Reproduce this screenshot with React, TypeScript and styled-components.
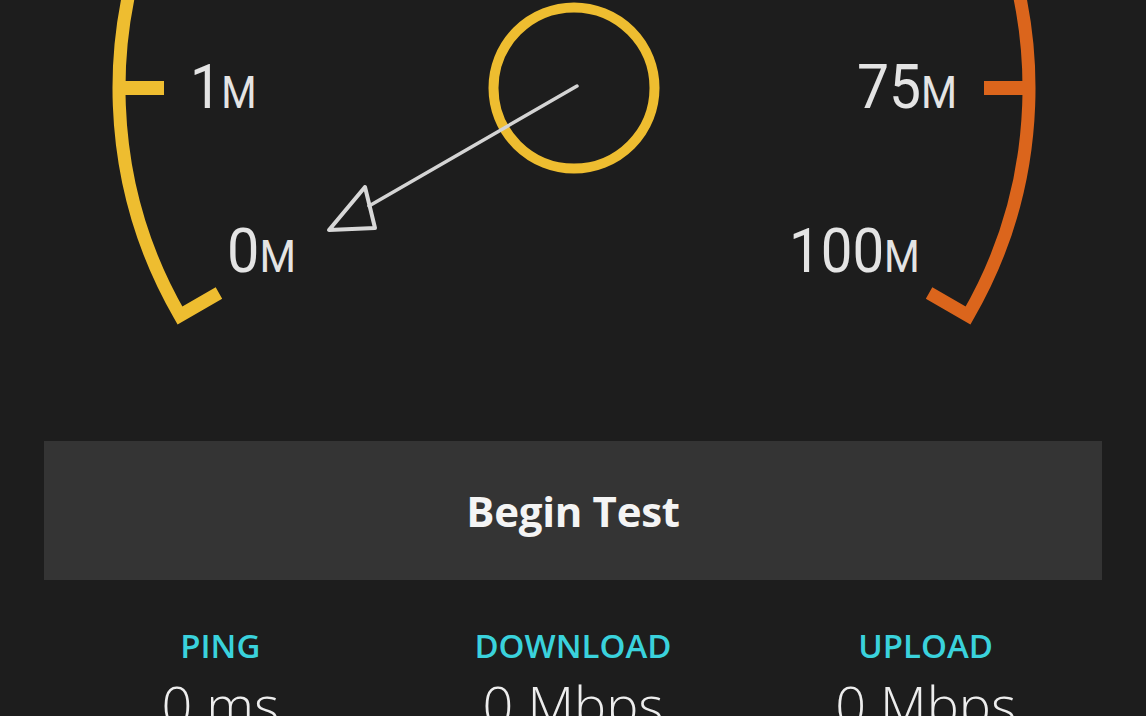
import React from "react";
import styled, { createGlobalStyle } from "styled-components";

const Global = createGlobalStyle`
  html, body { margin: 0; padding: 0; background: #1d1d1d; }
  #root { width: 1146px; height: 716px; }
`;

const YELLOW = "#eebd30";
const ORANGE = "#db651c";

const Screen = styled.div`
  width: 1146px;
  height: 716px;
  overflow: hidden;
  background: #1d1d1d;
  display: flex;
  flex-direction: column;
  font-family: "Open Sans", "Noto Sans", sans-serif;
`;

const GaugeSvg = styled.svg`
  display: block;
  width: 1146px;
  height: 441px;
  flex: none;
`;

const Label = styled.text`
  font-family: "Roboto", "DejaVu Sans Condensed", sans-serif;
  font-weight: 400;
  fill: #e4e4e4;
`;

const BeginButton = styled.button`
  flex: none;
  margin: 0 44px;
  height: 139px;
  border: none;
  background: #343434;
  color: #f4f4f4;
  font-family: "Open Sans", "Noto Sans", sans-serif;
  font-weight: 700;
  font-size: 42px;
  letter-spacing: -0.3px;
  display: flex;
  align-items: center;
  justify-content: center;
  padding: 0;
  cursor: pointer;
`;

const Stats = styled.div`
  margin: 46px 44px 0;
  display: grid;
  grid-template-columns: repeat(3, 1fr);
`;

const Stat = styled.div`
  display: flex;
  flex-direction: column;
  align-items: center;
  gap: 8px;
`;

const StatTitle = styled.div`
  color: #3ad2dc;
  font-weight: 600;
  font-size: 33px;
  line-height: 40px;
`;

const StatValue = styled.div`
  color: #ededed;
  font-weight: 300;
  font-size: 54px;
  line-height: 60px;
  white-space: nowrap;
`;

const cx = 574;
const cy = 88;
const R = 455;
const RI = 410;
const c30 = Math.cos(Math.PI / 6);
const s30 = 0.5;

const lx = cx - R * c30;
const ly = cy + R * s30;
const lix = cx - RI * c30;
const liy = cy + RI * s30;
const rx = cx + R * c30;
const rix = cx + RI * c30;

const arcPath = `M ${lix} ${liy} L ${lx} ${ly} A ${R} ${R} 0 1 1 ${rx} ${ly} L ${rix} ${liy}`;

const ScaleLabel: React.FC<{ x: number; y: number; num: string; scale?: number }> = ({
  x,
  y,
  num,
  scale = 0.9,
}) => (
  <Label x={0} y={0} transform={`translate(${x} ${y}) scale(${scale} 1)`}>
    <tspan fontSize="62">{num}</tspan>
    <tspan fontSize="45">M</tspan>
  </Label>
);

const Gauge: React.FC = () => (
  <GaugeSvg viewBox="0 0 1146 441">
    <defs>
      <linearGradient id="arcGrad" gradientUnits="userSpaceOnUse" x1="150" y1="0" x2="1000" y2="0">
        <stop offset="0" stopColor={YELLOW} />
        <stop offset="0.4" stopColor={YELLOW} />
        <stop offset="0.6" stopColor={ORANGE} />
        <stop offset="1" stopColor={ORANGE} />
      </linearGradient>
    </defs>
    <path d={arcPath} fill="none" stroke="url(#arcGrad)" strokeWidth="13" strokeLinejoin="miter" />
    <line x1={cx - R} y1={cy} x2={cx - R + 45} y2={cy} stroke={YELLOW} strokeWidth="14" />
    <line x1={cx + R} y1={cy} x2={cx + R - 45} y2={cy} stroke={ORANGE} strokeWidth="14" />
    <circle cx={cx} cy={cy} r="80.5" fill="none" stroke={YELLOW} strokeWidth="10" />
    <line x1="577" y1="86" x2="369" y2="206" stroke="#d4d4d4" strokeWidth="3.5" strokeLinecap="round" />
    <polygon
      points="329,230 375,228 365,187"
      fill="none"
      stroke="#d8d8d8"
      strokeWidth="4"
      strokeLinejoin="round"
    />
    <ScaleLabel x={190} y={108} num="1" />
    <ScaleLabel x={227} y={272} num="0" scale={0.93} />
    <ScaleLabel x={857} y={108} num="75" scale={0.92} />
    <ScaleLabel x={789} y={272} num="100" scale={0.91} />
  </GaugeSvg>
);

const stats = [
  { title: "PING", value: "0 ms" },
  { title: "DOWNLOAD", value: "0 Mbps" },
  { title: "UPLOAD", value: "0 Mbps" },
];

export default function App() {
  return (
    <Screen>
      <Global />
      <Gauge />
      <BeginButton>Begin Test</BeginButton>
      <Stats>
        {stats.map((s) => (
          <Stat key={s.title}>
            <StatTitle>{s.title}</StatTitle>
            <StatValue>{s.value}</StatValue>
          </Stat>
        ))}
      </Stats>
    </Screen>
  );
}
